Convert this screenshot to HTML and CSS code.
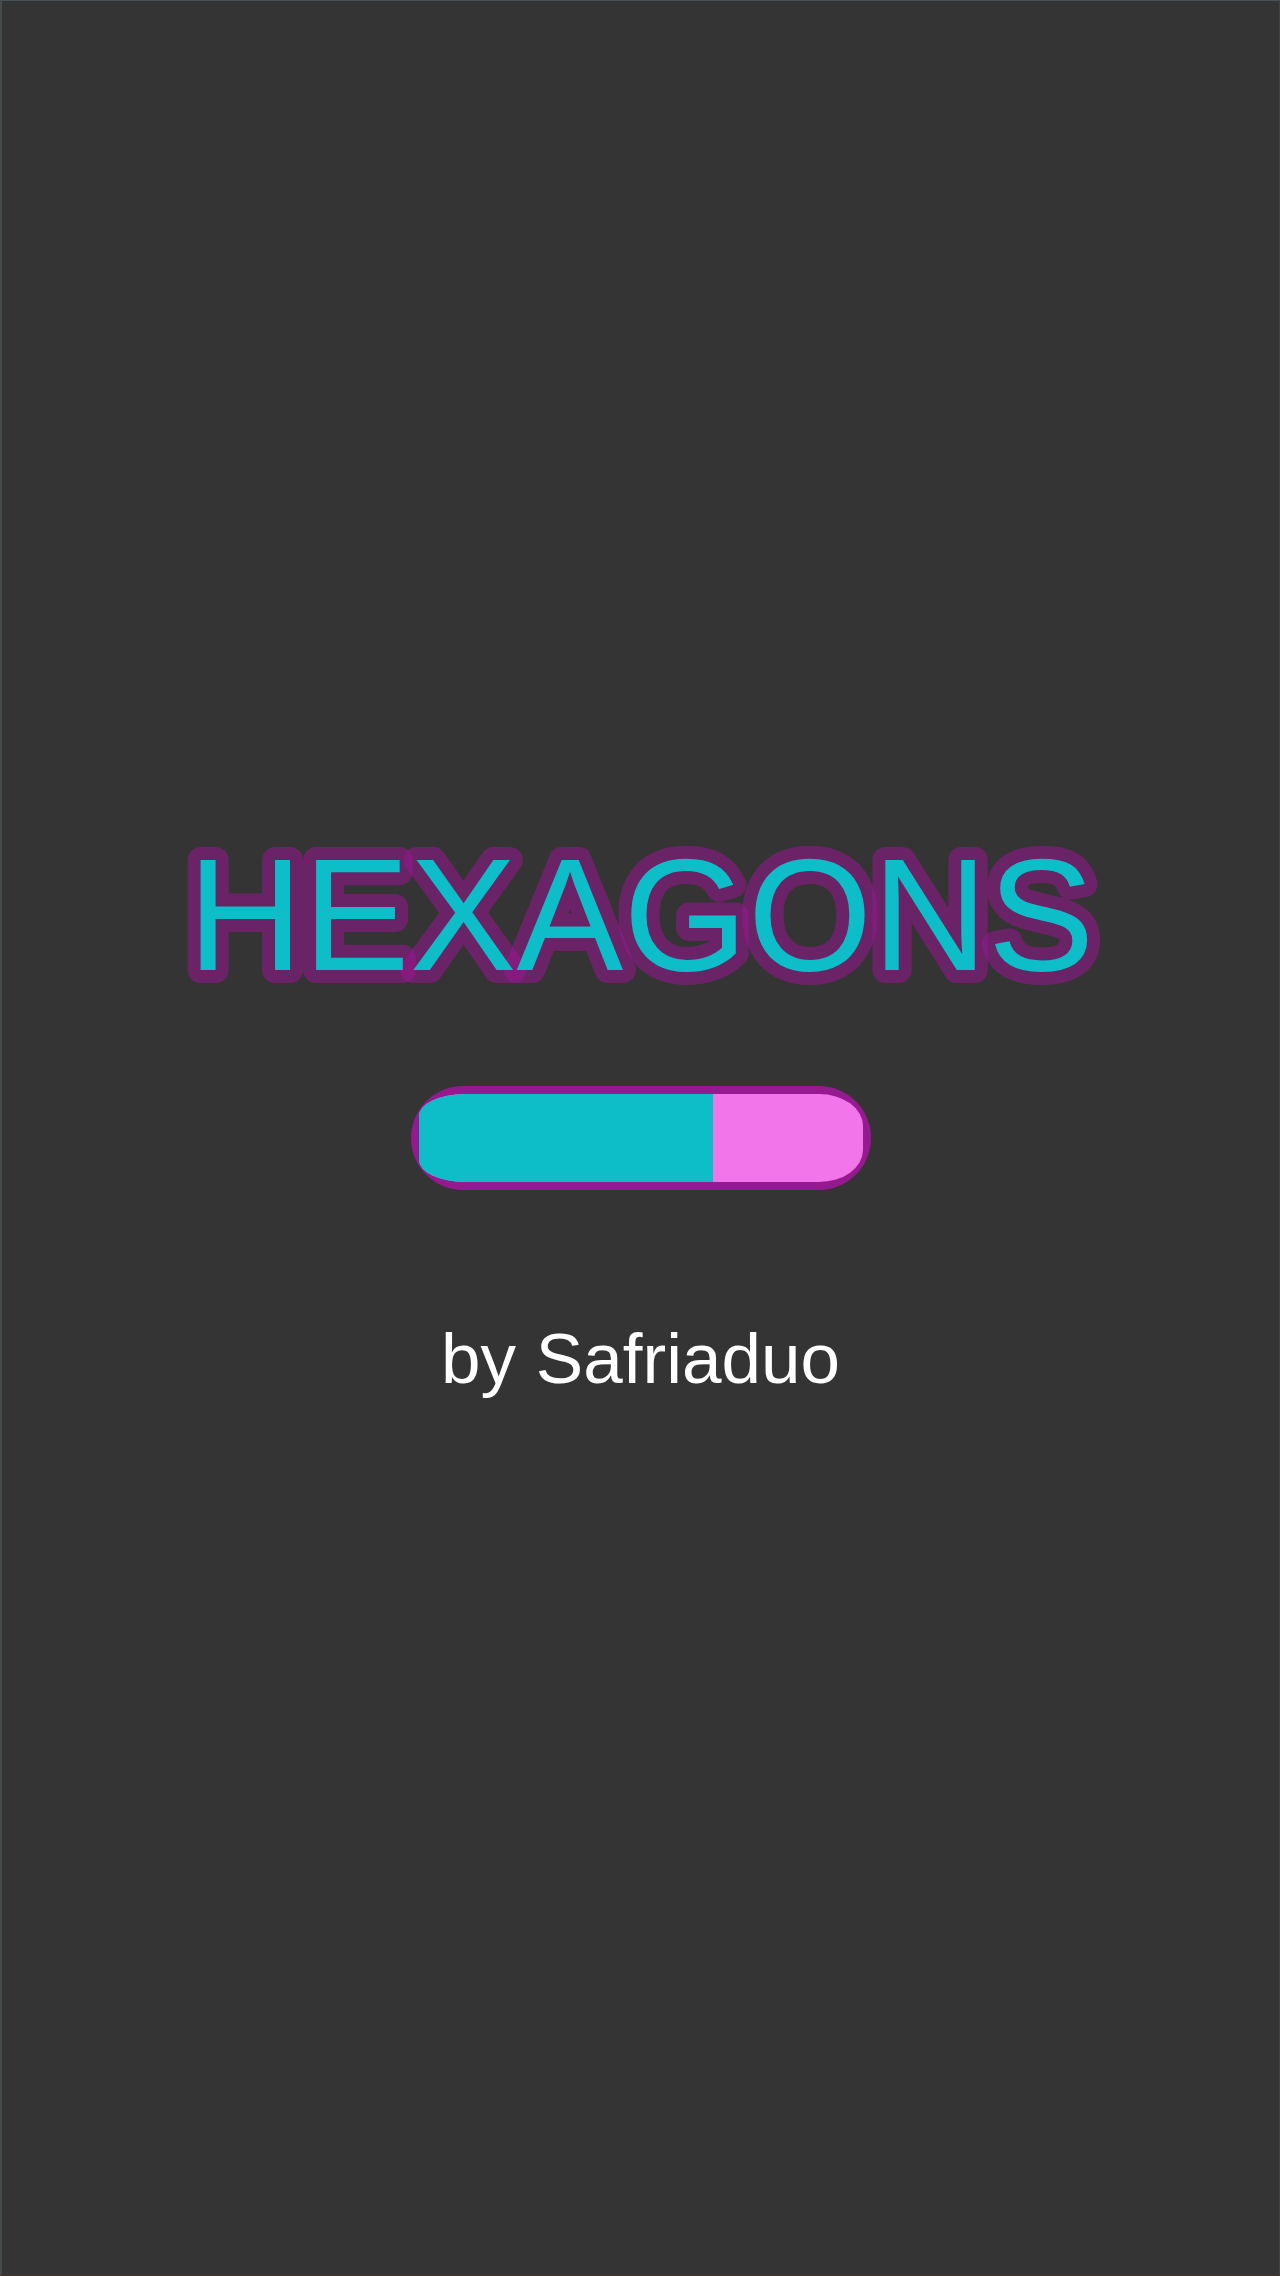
FILE: index.html
```html
<!DOCTYPE html>
<html>
<head>
<meta charset="utf-8">
<link rel="stylesheet" href="styles.css">
</head>
<body>
<main class="screen">
  <svg class="title" width="1280" height="260" viewBox="0 0 1280 260">
    <text class="title-text" x="640" y="171" text-anchor="middle">HEXAGONS</text>
  </svg>
  <div class="bar">
    <div class="bar-track">
      <div class="bar-fill" style="width: 294px"></div>
    </div>
  </div>
  <p class="credit">by Safriaduo</p>
</main>
</body>
</html>
```
FILE: styles.css
```css
html, body {
  margin: 0;
  padding: 0;
  background: #333333;
}

.screen {
  box-sizing: border-box;
  width: 1280px;
  height: 2276px;
  background: #343434;
  border-top: 1px solid #4a5157;
  border-left: 2px solid #464b4e;
  border-right: 1px solid #3f4246;
  border-bottom: 2px solid #3b352e;
  display: flex;
  flex-direction: column;
  align-items: center;
  padding-top: 798px;
  font-family: "Liberation Sans", Arial, sans-serif;
}

.title {
  display: block;
  flex: none;
}

.title-text {
  font-family: "Liberation Sans", Arial, sans-serif;
  font-size: 160px;
  fill: #0dbec9;
  stroke: rgba(158, 22, 150, 0.52);
  stroke-width: 26px;
  stroke-linejoin: round;
  paint-order: stroke fill;
}

.bar {
  margin-top: 27px;
  box-sizing: border-box;
  width: 460px;
  height: 104px;
  border-radius: 52px;
  background: #951a8f;
  padding: 8px;
  display: flex;
}

.bar-track {
  flex: 1;
  background: #f276ea;
  border-radius: 46px 44px 44px 46px / 22px 32px 32px 22px;
  overflow: hidden;
  display: flex;
}

.bar-fill {
  height: 100%;
  background: #0dbdc8;
}

.credit {
  margin: 134px 0 0 0;
  font-size: 70px;
  line-height: 70px;
  color: #ffffff;
  white-space: nowrap;
  transform: scaleX(1.015);
}
```
